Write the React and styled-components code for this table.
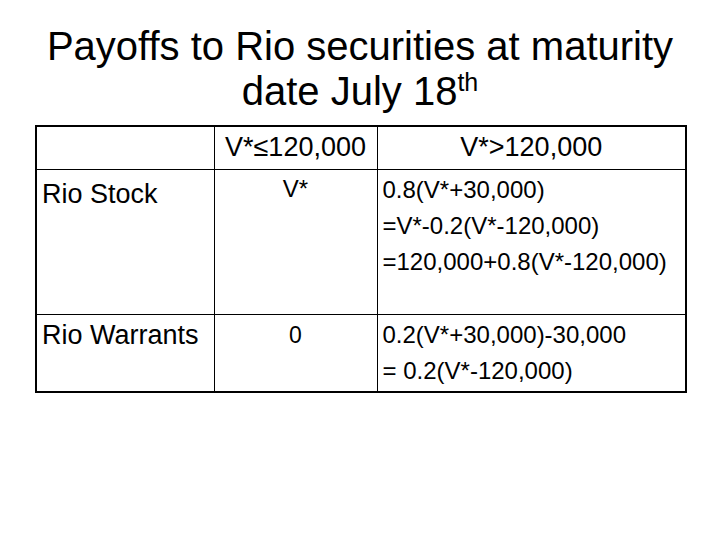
import styled, { createGlobalStyle } from "styled-components"

const GlobalStyle = createGlobalStyle`
	html, body {
		margin: 0;
		padding: 0;
		background: #ffffff;
	}
	body {
		font-family: "Liberation Sans", Arial, sans-serif;
		color: #000000;
	}
`

const Slide = styled.div`
	width: 720px;
	height: 540px;
	box-sizing: border-box;
	padding: 24px 35px 0 35px;
	display: flex;
	flex-direction: column;
	align-items: stretch;
`

const Title = styled.h1`
	margin: 0 0 11px 0;
	font-size: 40px;
	font-weight: normal;
	line-height: 45px;
	text-align: center;
	sup {
		font-size: 25px;
		line-height: 0;
		vertical-align: 14px;
	}
`

const Table = styled.table`
	width: 650px;
	border-collapse: collapse;
	border: 2px solid #000;
	table-layout: fixed;
`

const Cell = styled.td`
	border: 1px solid #000;
	padding: ${(p) => p.$pad || "2px 5px"};
	vertical-align: top;
	text-align: ${(p) => (p.$center ? "center" : "left")};
	font-size: ${(p) => p.$size || 27}px;
	line-height: ${(p) => p.$lh || 36}px;
	height: ${(p) => p.$h}px;
	box-sizing: border-box;
`

const Line = styled.div`
	white-space: nowrap;
`

export default function App() {
	return (
		<>
			<GlobalStyle />
			<Slide>
				<Title>
					Payoffs to Rio securities at maturity
					<br />
					date July 18<sup>th</sup>
				</Title>
				<Table>
					<colgroup>
						<col style={{ width: 178 }} />
						<col style={{ width: 163 }} />
						<col style={{ width: 309 }} />
					</colgroup>
					<tbody>
						<tr>
							<Cell $h={43} />
							<Cell $center $h={43}>V*≤120,000</Cell>
							<Cell $center $h={43}>V*&gt;120,000</Cell>
						</tr>
						<tr>
							<Cell $h={145} $pad="6px 5px">Rio Stock</Cell>
							<Cell $center $size={24} $h={145} $pad="1px 5px">V*</Cell>
							<Cell $size={24} $h={145}>
								<Line>0.8(V*+30,000)</Line>
								<Line>=V*-0.2(V*-120,000)</Line>
								<Line>=120,000+0.8(V*-120,000)</Line>
							</Cell>
						</tr>
						<tr>
							<Cell $h={76}>Rio Warrants</Cell>
							<Cell $center $size={23} $h={76}>0</Cell>
							<Cell $size={24} $h={76}>
								<Line>0.2(V*+30,000)-30,000</Line>
								<Line>= 0.2(V*-120,000)</Line>
							</Cell>
						</tr>
					</tbody>
				</Table>
			</Slide>
		</>
	)
}
